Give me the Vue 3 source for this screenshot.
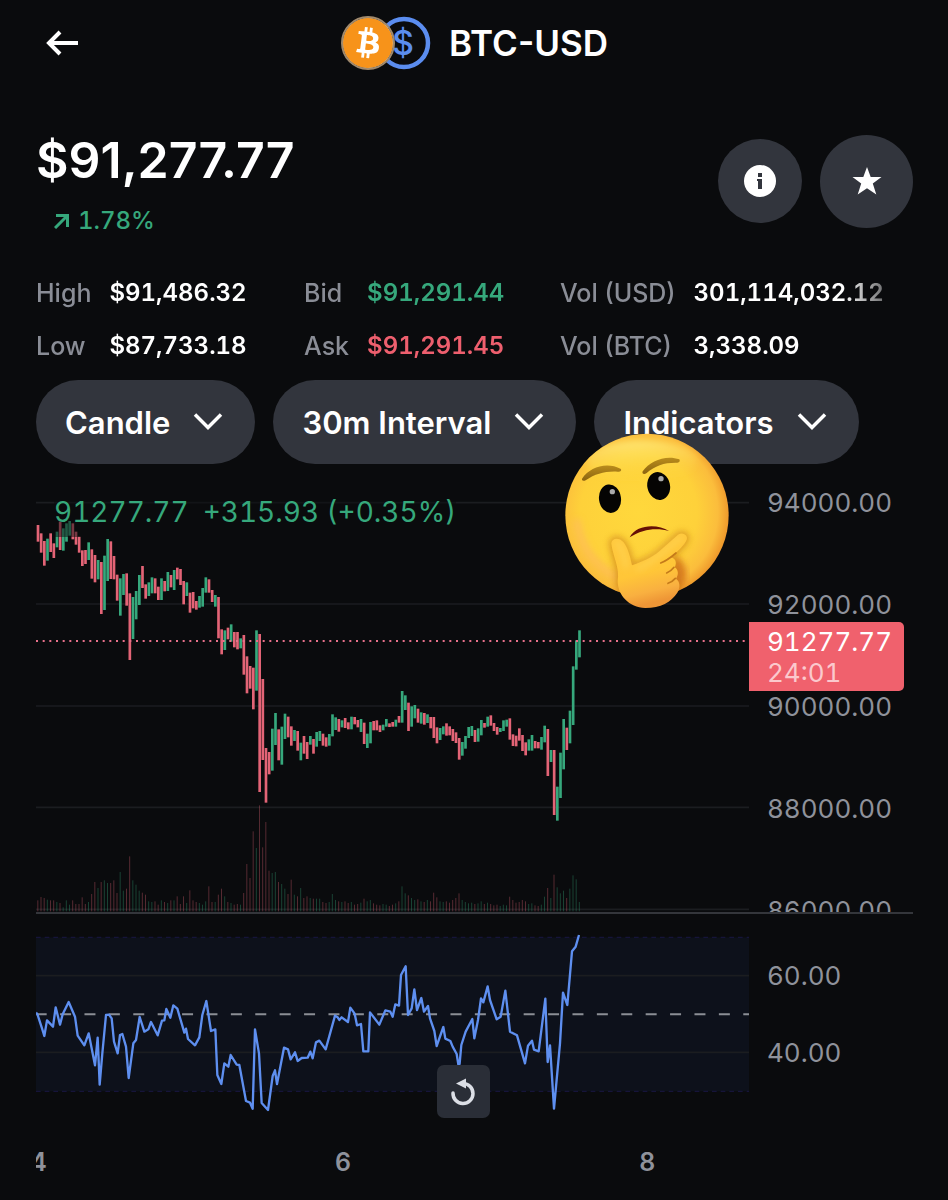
<template>
    <main class="page">
        <header class="topbar">
            <button class="back" type="button" aria-label="Back">
                <svg viewBox="0 0 34 28" width="34" height="28">
                    <path d="M33 14H4M15 3 4 14l11 11" fill="none" stroke="currentColor" stroke-width="4" />
                </svg>
            </button>
            <div class="pair">
                <svg class="coins" viewBox="0 0 90 54" width="90" height="54" aria-hidden="true">
                    <circle cx="63" cy="27" r="24" fill="#0a0b0d" stroke="#5b8def" stroke-width="4.5" />
                    <text x="62" y="39" text-anchor="middle" class="usd">$</text>
                    <circle cx="27" cy="27" r="25" fill="#fff" />
                    <path transform="rotate(-7 27 27) translate(2 2) scale(2.083)" fill="#f7931a" :d="btcPath" />
                    <circle cx="27" cy="27" r="26" fill="none" stroke="#a18a6d" stroke-width="2" />
                </svg>
                <h1>BTC-USD</h1>
            </div>
        </header>

        <section class="summary">
            <div>
                <div class="price">$91,277.77</div>
                <div class="change">
                    <svg viewBox="0 0 16 16" width="16" height="16">
                        <path d="M1 15 13 3M2 2.500H13.500V14" fill="none" stroke="currentColor" stroke-width="3" />
                    </svg>
                    1.78%
                </div>
            </div>
            <div class="actions">
                <button class="round" type="button" aria-label="Info">
                    <svg viewBox="0 0 32 32" width="32" height="32">
                        <circle cx="16" cy="16" r="16" fill="currentColor" />
                        <path d="M14 8h4v4h-4zM13 14h5v10h-4v-8h-1z" fill="#32353d" />
                    </svg>
                </button>
                <button class="round large" type="button" aria-label="Favorite">
                    <svg viewBox="0 0 30 30" width="30" height="30">
                        <path d="M15 1l3.700 10H29.500l-8.700 6.600L24.300 28.500 15 22.200 5.700 28.500l3.500-10.900L.5 11h10.800z" fill="currentColor" />
                    </svg>
                </button>
            </div>
        </section>

        <section class="stats">
            <dl v-for="(group, g) in stats" :key="g">
                <template v-for="row in group" :key="row.label">
                    <dt>{{ row.label }}</dt>
                    <dd :class="row.tone">{{ row.value }}</dd>
                </template>
            </dl>
        </section>

        <nav class="filters">
            <button v-for="name in filters" :key="name" class="pill" type="button">
                {{ name }}
                <svg viewBox="0 0 30 20" width="30" height="20">
                    <path d="M2 2.500 15 15.500 28 2.500" fill="none" stroke="currentColor" stroke-width="3.500" />
                </svg>
            </button>
        </nav>

        <section class="chart">
            <div class="plot">
                <svg class="canvas" viewBox="18 0 2139 1266" preserveAspectRatio="none">
                    <path class="grid" d="M18 38H2157M18 342H2157M18 648H2157M18 952H2157M18 1258H2157" />
                    <rect
                        v-for="(h, i) in volumes"
                        :key="'v' + i"
                        :x="22 + i * 9.5"
                        :y="1264 - h"
                        width="3"
                        :height="h"
                        :class="['vol', candles[i][2]]"
                    />
                    <rect
                        v-for="(c, i) in candles"
                        :key="'c' + i"
                        :x="20 + i * 9.5"
                        :y="c[0]"
                        width="8"
                        :height="c[1] - c[0]"
                        :class="c[2]"
                    />
                    <path class="last" d="M18 453H2157" />
                </svg>
                <div class="legend">
                    <span>91277.77</span>
                    <span>+315.93 (+0.35%)</span>
                </div>
                <svg class="emoji" viewBox="0 0 570 570" role="img" aria-label="Thinking face">
                    <defs>
                        <radialGradient id="face" cx="45%" cy="48%" r="55%">
                            <stop offset="0" stop-color="#ffd83c" />
                            <stop offset="0.65" stop-color="#fed13a" />
                            <stop offset="0.88" stop-color="#fbbd3c" />
                            <stop offset="1" stop-color="#ef9a2c" />
                        </radialGradient>
                        <linearGradient id="shine" x1="0.3" y1="0" x2="0.5" y2="1">
                            <stop offset="0" stop-color="#fff08a" stop-opacity="0.75" />
                            <stop offset="1" stop-color="#ffd83c" stop-opacity="0" />
                        </linearGradient>
                        <linearGradient id="hand" x1="0" y1="0" x2="0.25" y2="1">
                            <stop offset="0" stop-color="#ffc93e" />
                            <stop offset="0.6" stop-color="#ffc638" />
                            <stop offset="0.85" stop-color="#f9b040" />
                            <stop offset="1" stop-color="#ee9636" />
                        </linearGradient>
                        <linearGradient id="brow" x1="0" y1="0" x2="0" y2="1">
                            <stop offset="0" stop-color="#b98c1c" />
                            <stop offset="1" stop-color="#8c6410" />
                        </linearGradient>
                        <filter id="soft" x="-20%" y="-20%" width="140%" height="140%">
                            <feGaussianBlur stdDeviation="9" />
                        </filter>
                        <clipPath id="head">
                            <circle cx="291" cy="268" r="245" />
                        </clipPath>
                    </defs>
                    <circle cx="291" cy="268" r="245" fill="url(#face)" />
                    <g clip-path="url(#head)">
                        <ellipse cx="275" cy="105" rx="165" ry="62" fill="url(#shine)" filter="url(#soft)" />
                        <path d="M82 290c10 70 50 125 110 160" fill="none" stroke="#ffb866" stroke-width="24" stroke-linecap="round" opacity="0.5" filter="url(#soft)" />
                        <path d="M375 390c36 16 48 70 14 96l-30 6z" fill="#d4701c" opacity="0.8" filter="url(#soft)" />
                        <path :d="handPath" fill="#c87818" stroke="#c87818" stroke-width="14" opacity="0.6" filter="url(#soft)" />
                    </g>
                    <path d="M97 157c22-34 74-51 116-28 2 6-2 9-10 8-38-2-66 6-96 26-8 4-14 0-10-6z" fill="url(#brow)" />
                    <path d="M278 136c22-32 70-50 110-36 3 5 1 9-6 10-38-1-66 8-92 31-8 6-15 2-12-5z" fill="url(#brow)" />
                    <ellipse cx="180" cy="218" rx="33" ry="43" transform="rotate(-8 180 218)" fill="#050403" />
                    <ellipse cx="326" cy="180" rx="34" ry="42" transform="rotate(-12 326 180)" fill="#050403" />
                    <circle cx="187" cy="197" r="8" fill="#aaa" />
                    <circle cx="333" cy="158" r="8" fill="#aaa" />
                    <path d="M239 334c22-40 84-40 118-19-34-10-78-8-118 19z" fill="#651006" />
                    <path :d="handPath" fill="url(#hand)" />
                    <path d="M200 350c14 14 24 44 28 72M262 428c40-14 84-56 130-92" fill="none" stroke="#ffdc62" stroke-width="12" stroke-linecap="round" opacity="0.6" filter="url(#soft)" />
                    <path d="M332 411c14-5 32-18 46-30M350 441c8-3 16-9 22-17M354 472c8-3 16-8 22-15" fill="none" stroke="#c47a1a" stroke-width="5" stroke-linecap="round" />
                </svg>
            </div>
            <div class="axis">
                <span v-for="p in prices" :key="p">{{ p }}</span>
                <div class="tag">
                    <div>91277.77</div>
                    <div class="countdown">24:01</div>
                </div>
            </div>
        </section>

        <section class="chart rsi">
            <div class="plot">
                <svg class="canvas" viewBox="18 -18 2139 648" preserveAspectRatio="none">
                    <rect x="18" y="52" width="2139" height="462" fill="#0d111b" />
                    <path class="bound" d="M18 52H2157M18 514H2157" />
                    <path class="grid" d="M18 167H2157M18 397H2157" />
                    <path class="mid" d="M17 283H2157" />
                    <polyline class="line" :points="rsi" />
                </svg>
                <button class="reset" type="button" aria-label="Reset chart">
                    <svg viewBox="0 0 24 28" width="24" height="28">
                        <path d="M2 15a10 10 0 1 0 10-9.500" fill="none" stroke="currentColor" stroke-width="3.500" stroke-linecap="round" />
                        <path d="M5 5.500 15 .5v10z" fill="currentColor" />
                    </svg>
                </button>
            </div>
            <div class="axis">
                <span>60.00</span>
                <span>40.00</span>
            </div>
        </section>

        <footer class="days">
            <span v-for="day in [4, 6, 8]" :key="day">{{ day }}</span>
        </footer>
    </main>
</template>

<script setup>
const filters = ['Candle', '30m Interval', 'Indicators'];

const prices = ['94000.00', '92000.00', '90000.00', '88000.00', '86000.00'];

const stats = [
    [
        { label: 'High', value: '$91,486.32' },
        { label: 'Low', value: '$87,733.18' },
    ],
    [
        { label: 'Bid', value: '$91,291.44', tone: 'green' },
        { label: 'Ask', value: '$91,291.45', tone: 'red' },
    ],
    [
        { label: 'Vol (USD)', value: '301,114,032.12' },
        { label: 'Vol (BTC)', value: '3,338.09' },
    ],
];

// top and bottom of each bar in chart units, then its direction
const bars = `
105 155 r,130 188 r,153 227 r,146 212 g,130 186 r,160 204 r,125 172 g,95 180 r,115 182 g,100 155 g,
93 137 g,100 148 r,125 164 r,140 188 r,181 228 r,180 222 r,157 210 g,178 266 r,195 277 r,210 268 g,
216 372 r,197 360 g,147 273 g,154 267 r,198 268 r,254 332 r,265 377 g,252 315 g,250 347 r,310 510 r,
321 447 g,303 388 g,255 345 g,228 294 r,283 326 r,277 318 g,262 310 g,265 310 r,290 330 r,265 330 g,
273 304 r,246 303 g,255 292 r,240 300 g,233 268 r,237 285 r,273 343 r,277 318 g,308 368 r,306 355 r,
333 359 r,318 353 g,294 350 g,262 308 g,268 308 r,300 336 r,315 350 g,321 445 r,418 493 r,421 480 g,
413 448 r,403 455 g,426 472 r,426 478 r,445 475 g,435 554 r,499 610 r,528 596 r,533 658 r,421 602 g,
432 906 r,567 810 r,774 938 r,786 853 r,716 842 g,669 765 g,718 811 r,710 824 g,671 747 g,680 742 r,
709 767 r,720 753 g,723 782 r,758 811 g,738 791 r,756 807 r,738 764 g,747 791 r,726 770 g,723 753 g,
731 767 r,742 770 r,732 767 g,673 739 g,682 720 g,687 725 r,691 712 g,684 714 r,697 718 r,680 718 g,
681 703 r,690 712 r,687 726 g,698 762 r,731 774 g,696 760 g,693 721 r,691 721 r,706 726 r,704 721 g,
687 710 g,700 711 r,696 710 r,689 710 g,678 698 r,603 698 g,616 660 g,638 723 r,649 710 g,645 685 g,
656 698 r,667 701 g,669 704 r,673 699 g,681 715 r,681 744 r,712 760 r,714 750 g,709 733 g,700 737 r,
709 736 r,717 753 r,727 759 r,744 809 r,756 797 g,738 776 g,711 744 g,708 738 g,720 756 r,715 755 g,
690 736 g,699 713 r,680 710 g,676 707 r,699 723 r,711 734 r,714 726 g,691 723 g,689 710 g,685 749 r,
733 768 r,737 769 r,715 752 r,735 783 r,757 796 r,748 782 g,735 782 g,753 775 r,756 775 r,741 779 g,
707 757 g,717 858 r,780 816 g,780 975 r,890 992 g,788 924 g,687 838 g,713 780 r,662 760 g,529 705 g,
451 539 g,421 502 g`;

const candles = bars.split(',').map((bar) => {
    const [top, bottom, dir] = bar.trim().split(' ');
    return [Number(top), Number(bottom), dir];
});

const volumes = [
    33, 43, 40, 35, 33, 33, 28, 25, 12, 33, 20, 33, 22, 22, 42, 22, 28, 52, 88, 70, 88, 93, 85, 85, 93,
    55, 118, 62, 68, 165, 93, 80, 62, 56, 50, 30, 28, 30, 20, 33, 28, 25, 33, 33, 45, 22, 45, 25, 63, 33,
    28, 25, 20, 30, 75, 28, 28, 50, 68, 45, 28, 25, 20, 22, 20, 55, 142, 100, 240, 190, 318, 192, 268, 122, 115,
    118, 88, 82, 68, 52, 95, 50, 45, 70, 40, 45, 40, 38, 38, 38, 28, 25, 28, 52, 34, 30, 28, 30, 25, 28,
    20, 22, 26, 38, 30, 34, 24, 20, 18, 22, 20, 16, 20, 24, 30, 75, 54, 48, 40, 34, 36, 30, 28, 34, 30,
    56, 42, 30, 28, 30, 26, 34, 40, 54, 34, 28, 24, 26, 22, 24, 30, 22, 26, 22, 18, 20, 16, 20, 18, 44,
    34, 26, 28, 34, 30, 22, 24, 18, 16, 20, 44, 70, 40, 110, 72, 54, 62, 40, 68, 108, 96, 28,
];

const rsi = `18,278 22,282 36,325 43,348 51,301 69,320 77,262 90,314 98,283 116,246 135,290 143,347 163,376 176,340
195,436 203,353 209,494 217,400 228,285 237,284 245,295 252,365 263,400 270,345 277,342 288,380 296,474 310,370
318,360 329,291 343,335 355,328 363,306 383,346 396,302 403,301 409,267 421,293 430,256 442,266 463,338 468,326
474,357 495,376 508,352 517,285 529,243 543,333 556,328 562,465 574,492 583,430 595,440 602,405 620,434 628,435
648,543 660,548 668,566 675,328 687,400 695,549 714,570 728,468 735,451 741,492 762,383 774,388 782,418 795,397
803,423 815,414 833,413 841,395 848,415 858,367 868,362 887,388 915,287 923,292 928,300 935,292 954,306 961,263
974,281 981,316 993,312 1000,394 1015,394 1020,277 1048,314 1066,271 1081,275 1088,290 1096,253 1107,257
1113,165 1127,139 1134,285 1145,265 1153,208 1161,270 1174,234 1182,275 1194,258 1200,295 1213,333 1220,378
1240,321 1246,356 1261,363 1268,380 1280,402 1286,440 1289,430 1294,375 1307,335 1327,297 1333,355 1344,300
1353,235 1360,247 1373,199 1380,240 1400,298 1412,290 1426,212 1440,335 1461,346 1485,430 1494,377 1506,362
1512,389 1526,394 1546,236 1553,426 1560,376 1572,566 1590,370 1599,218 1612,255 1626,94 1637,80 1647,45`;

const btcPath =
    'M23.638 14.904c-1.602 6.43-8.113 10.34-14.542 8.736C2.67 22.05-1.244 15.525.362 9.105 1.962 2.67 8.475-1.243 14.9.358c6.43 1.605 10.342 8.115 8.738 14.548v-.002zm-6.35-4.613c.24-1.59-.974-2.45-2.64-3.03l.54-2.153-1.315-.33-.525 2.107c-.345-.087-.705-.167-1.064-.25l.526-2.127-1.32-.33-.54 2.165c-.285-.067-.565-.132-.84-.2l-1.815-.45-.35 1.407s.975.225.955.236c.535.136.63.486.615.766l-1.477 5.92c-.075.166-.24.406-.614.314.015.02-.96-.24-.96-.24l-.66 1.51 1.71.426.93.242-.54 2.19 1.32.327.54-2.17c.36.1.705.19 1.05.273l-.51 2.154 1.32.33.545-2.19c2.24.427 3.93.257 4.64-1.774.57-1.637-.03-2.58-1.217-3.196.854-.193 1.5-.76 1.68-1.93h.01zm-3.01 4.22c-.404 1.64-3.157.75-4.05.53l.72-2.9c.896.23 3.757.67 3.33 2.37zm.41-4.24c-.37 1.49-2.662.735-3.405.55l.654-2.64c.744.18 3.137.524 2.75 2.084v.006z';

const handPath =
    'M184 352C186 334 208 334 220 348C234 366 240 390 246 418C276 408 304 396 328 376L384 326C400 316 418 330 408 346C398 364 378 380 362 394C376 396 382 410 374 424C386 432 386 446 378 458C390 466 392 484 382 500C364 528 332 546 286 546C236 544 204 508 203 466C210 424 188 392 184 352z';
</script>

<style>
body {
    margin: 0;
    background: #0a0b0d;
}
</style>

<style scoped>
.page {
    min-height: 100vh;
    box-sizing: border-box;
    padding: 0 35px 0 36px;
    background: #0a0b0d;
    color: #fff;
    font-family: Inter, 'Liberation Sans', sans-serif;
    font-size: 25px;
    overflow: hidden;
}

button {
    border: 0;
    padding: 0;
    color: inherit;
    font-family: inherit;
    cursor: pointer;
}

svg {
    display: block;
}

.topbar {
    display: grid;
    grid-template-columns: 1fr auto 1fr;
    align-items: center;
    height: 86px;
}

.back {
    justify-self: start;
    margin-left: 9px;
    background: none;
}

.pair {
    display: flex;
    align-items: center;
    gap: 18px;
}

.usd {
    fill: #5b8def;
    font-size: 34px;
    font-weight: 500;
}

h1 {
    margin: 0;
    font-size: 35px;
    font-weight: 600;
    line-height: 40px;
}

.summary {
    display: flex;
    justify-content: space-between;
    align-items: center;
    padding-top: 40px;
}

.price {
    font-size: 50px;
    font-weight: 600;
    line-height: 68px;
}

.change {
    display: flex;
    align-items: center;
    gap: 8px;
    margin-top: 12px;
    padding-left: 18px;
    color: #36a87c;
    font-size: 24px;
    font-weight: 500;
    font-variant-numeric: tabular-nums;
    line-height: 30px;
}

.actions {
    display: flex;
    align-items: center;
    gap: 18px;
}

.round {
    display: flex;
    align-items: center;
    justify-content: center;
    width: 84px;
    height: 84px;
    border-radius: 50%;
    background: #32353d;
}

.round.large {
    width: 93px;
    height: 93px;
}

.stats {
    display: grid;
    grid-template-columns: 268px 256px 1fr;
    margin-top: 42px;
    white-space: nowrap;
    -webkit-mask-image: linear-gradient(90deg, #000 92%, transparent 100%);
    mask-image: linear-gradient(90deg, #000 92%, transparent 100%);
}

dl {
    display: grid;
    grid-template-columns: auto auto;
    justify-content: start;
    gap: 23px 18px;
    margin: 0;
    line-height: 30px;
    font-weight: 500;
}

dt {
    color: #8a8d96;
}

dd {
    margin: 0;
    font-size: 24px;
    font-weight: 600;
    font-variant-numeric: tabular-nums;
}

dd.green {
    color: #36a87c;
}

dd.red {
    color: #ee5f6e;
}

.filters {
    display: flex;
    gap: 18px;
    margin-top: 19px;
}

.pill {
    display: flex;
    align-items: center;
    gap: 23px;
    height: 84px;
    padding: 0 32px 0 29px;
    border-radius: 42px;
    background: #32353d;
    font-size: 31px;
    font-weight: 600;
    white-space: nowrap;
}

.chart {
    display: grid;
    grid-template-columns: 1fr 164px;
    margin-top: 26px;
    height: 422px;
    border-bottom: 2px solid #34363b;
}

.plot,
.axis {
    position: relative;
    min-width: 0;
}

.canvas {
    width: 100%;
    height: 100%;
}

.grid {
    stroke: #1b1d20;
    stroke-width: 5;
}

.r {
    fill: #e36476;
}

.g {
    fill: #36a87c;
}

.vol {
    opacity: 0.35;
}

.last {
    fill: none;
    stroke: #e8708a;
    stroke-width: 6;
    stroke-dasharray: 6 14;
}

.legend {
    position: absolute;
    top: 5px;
    left: 18px;
    display: flex;
    gap: 14px;
    padding-bottom: 8px;
    background: rgba(10, 11, 13, 0.5);
    color: #36a87c;
    font-size: 28px;
    font-variant-numeric: tabular-nums;
    line-height: 34px;
    white-space: nowrap;
}

.emoji {
    position: absolute;
    top: -64px;
    left: calc(72% + 1px);
    width: 190px;
    height: 190px;
}

.axis {
    display: flex;
    flex-direction: column;
    gap: 76px;
    padding-left: 18px;
    overflow: hidden;
    color: #8f929b;
    font-size: 26px;
    font-variant-numeric: tabular-nums;
    line-height: 26px;
}

.tag {
    position: absolute;
    top: 132px;
    left: 0;
    width: 155px;
    box-sizing: border-box;
    padding: 4px 0 3px 18px;
    border-radius: 0 5px 5px 0;
    background: #f0616d;
    color: #fff;
    line-height: 31px;
}

.countdown {
    color: #fbc9cd;
}

.rsi {
    margin-top: 0;
    height: 216px;
    border-bottom: 0;
}

.rsi .axis {
    gap: 51px;
    padding-top: 49px;
}

.bound {
    stroke: #16143a;
    stroke-width: 4;
    stroke-dasharray: 14 12;
}

.mid {
    stroke: #8b8e95;
    stroke-width: 6;
    stroke-dasharray: 33 40.2;
}

.line {
    fill: none;
    stroke: #5e8ff0;
    stroke-width: 7;
    stroke-linejoin: round;
}

.reset {
    position: absolute;
    top: 151px;
    left: calc(60% - 27px);
    display: flex;
    align-items: center;
    justify-content: center;
    width: 53px;
    height: 53px;
    border-radius: 7px;
    background: #2a2e37;
    color: #dcdfe6;
}

.days {
    display: flex;
    margin-right: 164px;
    padding-top: 16px;
    overflow: hidden;
    color: #8f929b;
    font-weight: 600;
    line-height: 32px;
    text-align: center;
}

.days span {
    flex: 0 0 42.7%;
}

.days span:first-child {
    margin-left: -21%;
}
</style>
